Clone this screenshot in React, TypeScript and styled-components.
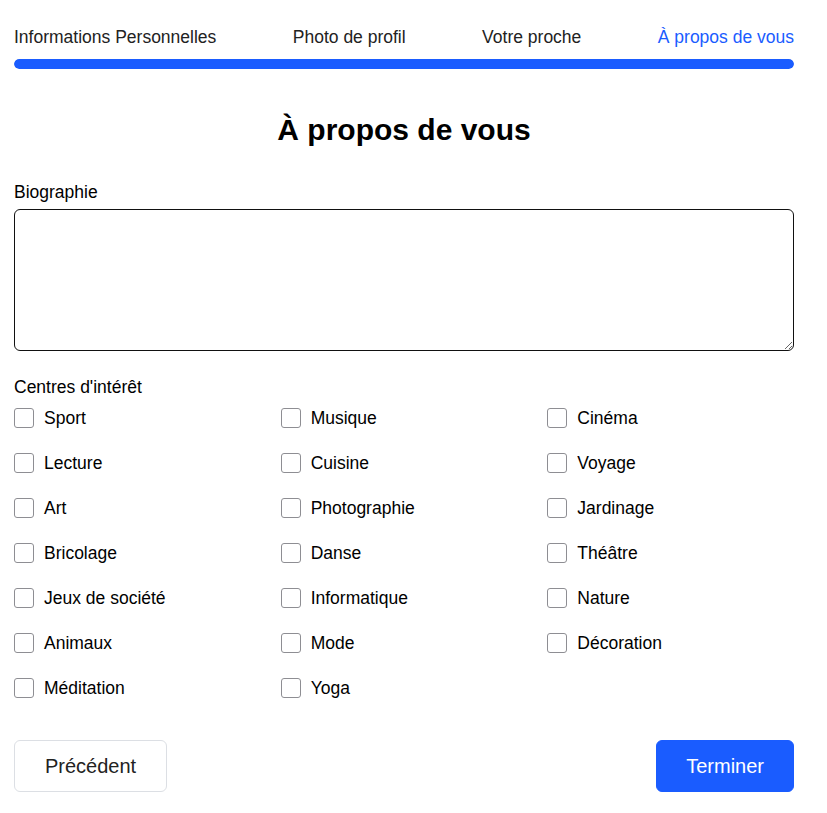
import styled, {createGlobalStyle} from "styled-components";

const ACCENT = "#1a5cff";
const TEXT = "#111111";

const GlobalStyle = createGlobalStyle`
    body {
        margin: 0;
        background: #ffffff;
        font-family: "Liberation Sans", Arial, sans-serif;
        color: ${TEXT};
    }
`;

const Page = styled.div`
    width: 780px;
    padding: 26px 14px 20px;
`;

const Steps = styled.div`
    display: flex;
    justify-content: space-between;
    font-size: 17.5px;
    line-height: 22px;
`;

const Step = styled.span<{active?: boolean}>`
    color: ${props => (props.active ? ACCENT : "#222222")};
`;

const Progress = styled.div`
    margin-top: 11px;
    height: 10px;
    border-radius: 5px;
    background: #e5e7eb;
    overflow: hidden;
`;

const ProgressFill = styled.div`
    height: 100%;
    background: ${ACCENT};
    border-radius: 5px;
`;

const Title = styled.h1`
    margin: 43px 0 0;
    text-align: center;
    font-size: 30px;
    line-height: 36px;
    font-weight: bold;
    color: #000000;
`;

const Field = styled.div`
    display: flex;
    flex-direction: column;
    margin-top: 33px;
`;

const Label = styled.label`
    font-size: 17.5px;
    line-height: 22px;
    color: #000000;
`;

const TextArea = styled.textarea`
    margin-top: 6px;
    box-sizing: border-box;
    width: 100%;
    height: 142px;
    border: 1px solid #111111;
    border-radius: 6px;
    padding: 8px;
    font-family: inherit;
    font-size: 17.5px;
`;

const Interests = styled.div`
    margin-top: 25px;
`;

const Grid = styled.div`
    margin-top: 10px;
    display: grid;
    grid-template-columns: repeat(3, 1fr);
    column-gap: 20px;
    row-gap: 25px;
`;

const Option = styled.label`
    display: flex;
    align-items: center;
    gap: 10px;
    height: 20px;
    font-size: 17.5px;
    color: #000000;
`;

const Checkbox = styled.input`
    appearance: none;
    margin: 0;
    box-sizing: border-box;
    width: 20px;
    height: 20px;
    border: 1px solid #8e8e93;
    border-radius: 3px;
    background: #ffffff;

    &:checked {
        background: ${ACCENT};
        border-color: ${ACCENT};
    }
`;

const Actions = styled.div`
    margin-top: 42px;
    display: flex;
    justify-content: space-between;
`;

const Button = styled.button<{primary?: boolean}>`
    height: 52px;
    padding: 0 ${props => (props.primary ? 29 : 30)}px;
    border-radius: 6px;
    font-family: inherit;
    font-size: 20px;
    border: 1px solid ${props => (props.primary ? ACCENT : "#dcdfe4")};
    background: ${props => (props.primary ? ACCENT : "#ffffff")};
    color: ${props => (props.primary ? "#ffffff" : "#222222")};
    cursor: pointer;
`;

const STEPS = ["Informations Personnelles", "Photo de profil", "Votre proche", "À propos de vous"];

const INTERESTS = [
    "Sport", "Musique", "Cinéma",
    "Lecture", "Cuisine", "Voyage",
    "Art", "Photographie", "Jardinage",
    "Bricolage", "Danse", "Théâtre",
    "Jeux de société", "Informatique", "Nature",
    "Animaux", "Mode", "Décoration",
    "Méditation", "Yoga",
];

export default function App() {
    return (
        <>
            <GlobalStyle />
            <Page>
                <Steps>
                    {STEPS.map((step, index) => (
                        <Step key={step} active={index === STEPS.length - 1}>{step}</Step>
                    ))}
                </Steps>
                <Progress>
                    <ProgressFill style={{width: "100%"}} />
                </Progress>
                <Title>À propos de vous</Title>
                <Field>
                    <Label htmlFor="bio">Biographie</Label>
                    <TextArea id="bio" />
                </Field>
                <Interests>
                    <Label>Centres d'intérêt</Label>
                    <Grid>
                        {INTERESTS.map(item => (
                            <Option key={item}>
                                <Checkbox type="checkbox" />
                                {item}
                            </Option>
                        ))}
                    </Grid>
                </Interests>
                <Actions>
                    <Button>Précédent</Button>
                    <Button primary>Terminer</Button>
                </Actions>
            </Page>
        </>
    );
}
